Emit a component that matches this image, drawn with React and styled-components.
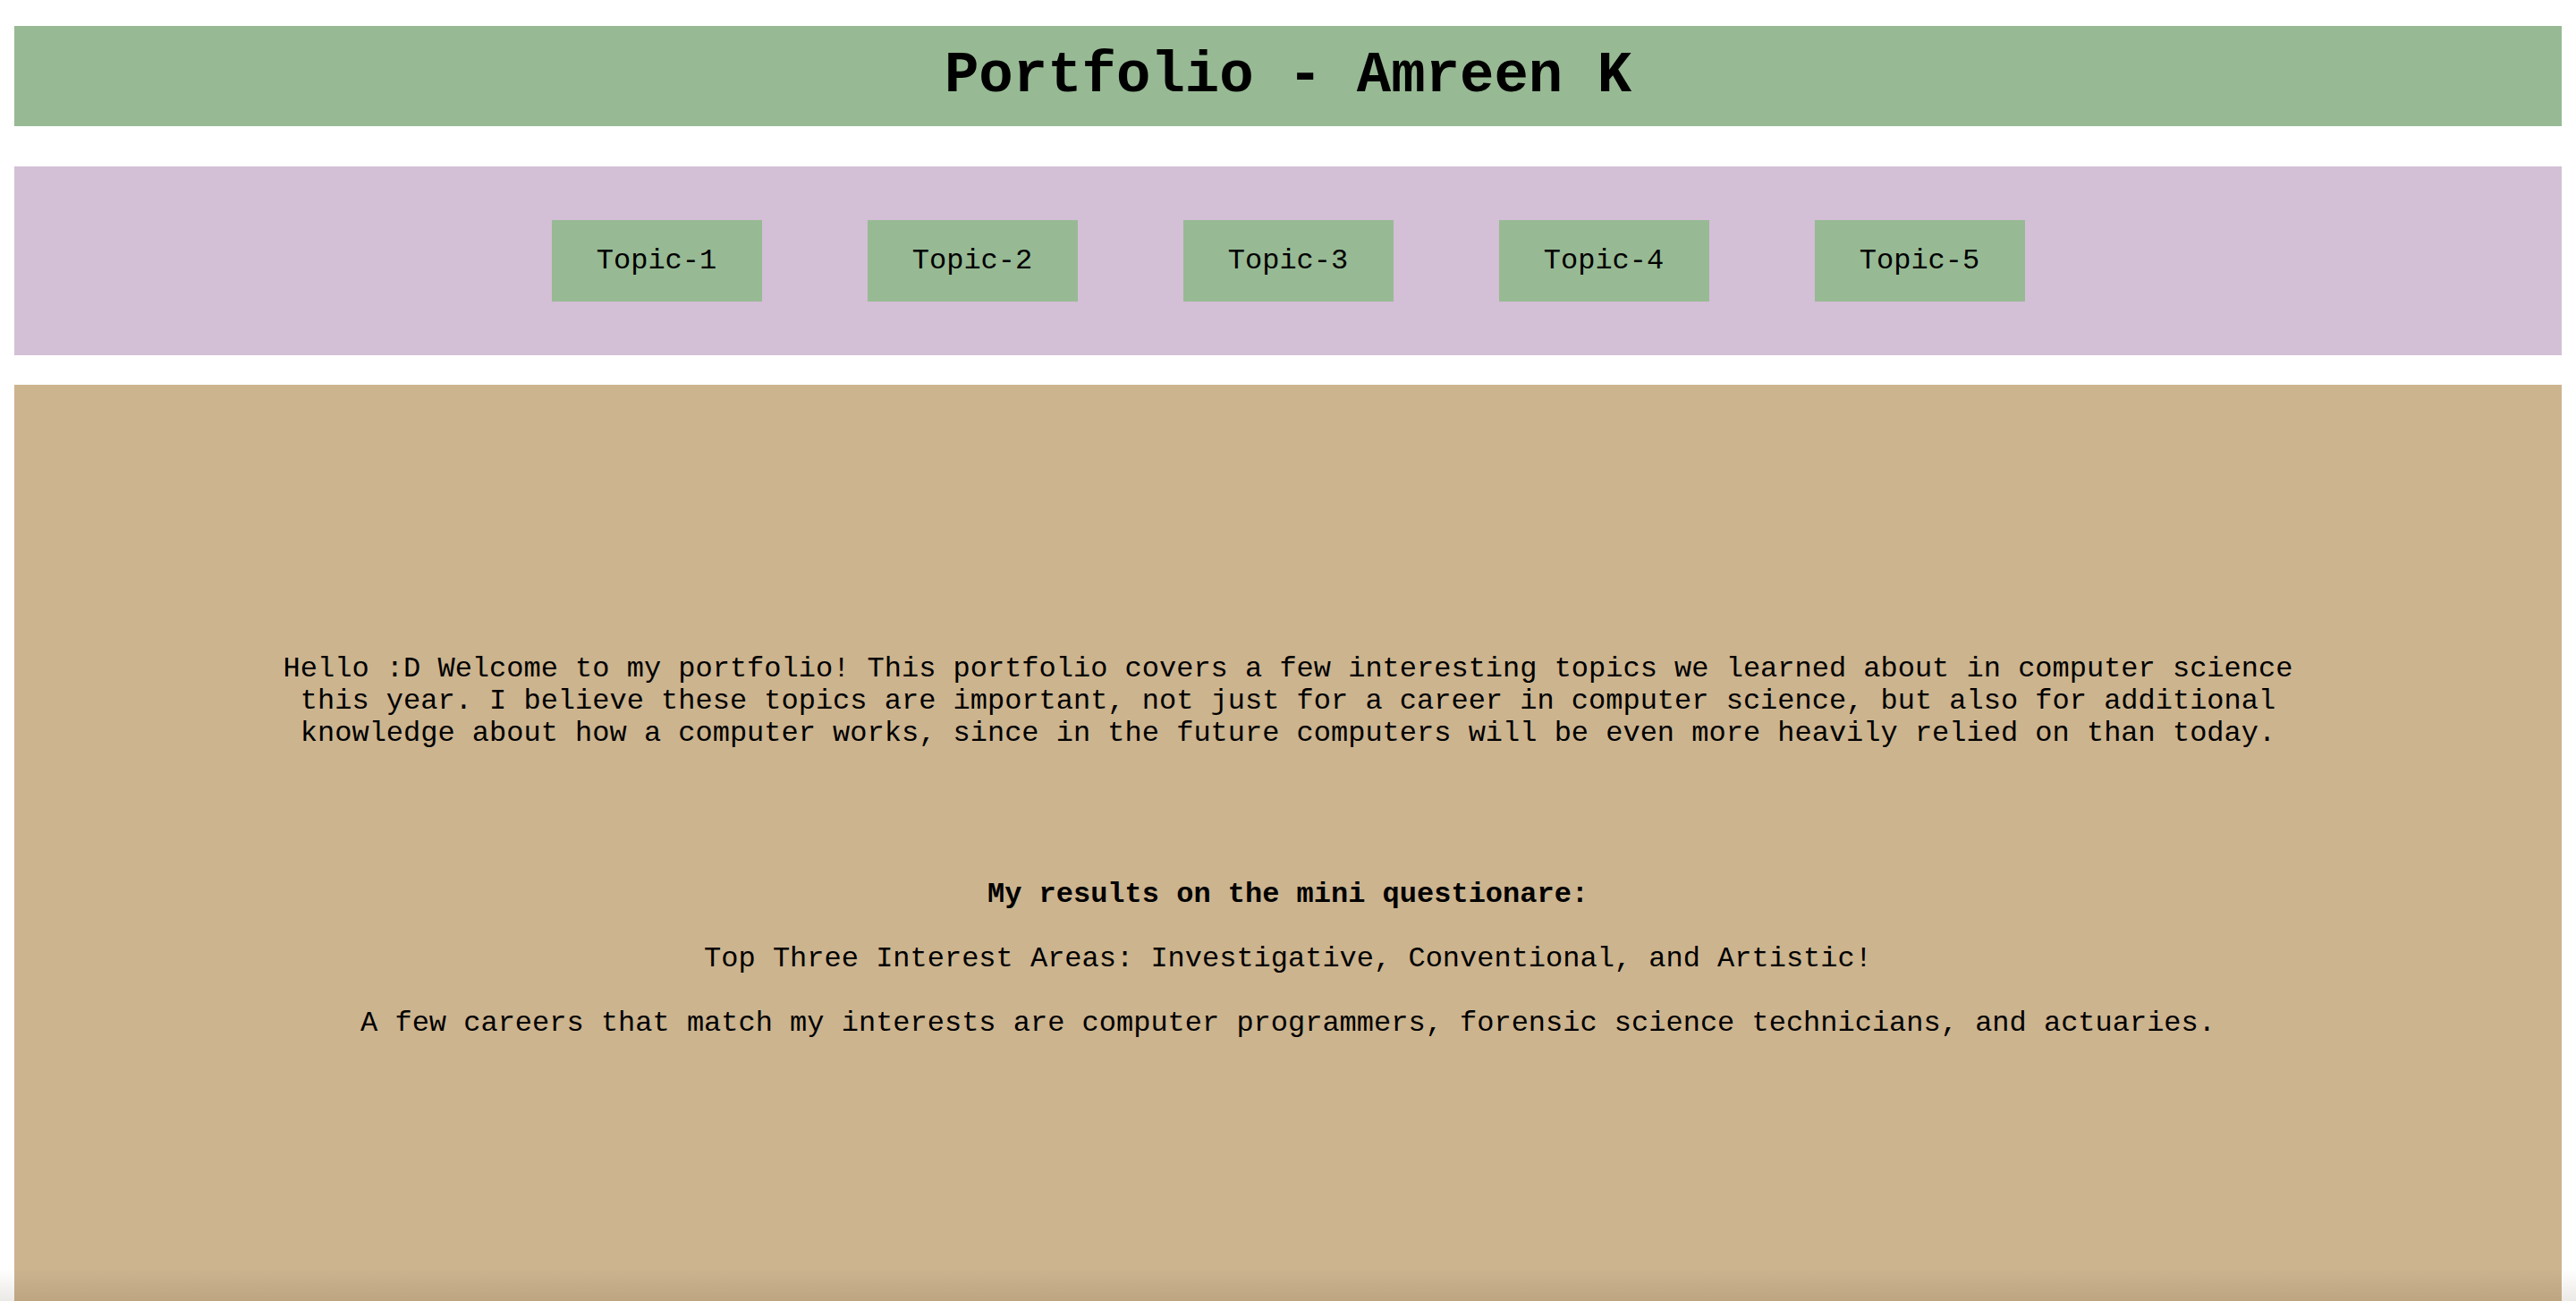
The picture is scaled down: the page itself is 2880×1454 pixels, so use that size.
import styled, { createGlobalStyle } from "styled-components";

const GlobalStyle = createGlobalStyle`
  html, body {
    margin: 0;
    padding: 0;
    background: #ffffff;
  }
  body {
    font-family: "Liberation Mono", "Courier New", monospace;
    color: #000;
  }
`;

const Page = styled.div`
  display: flex;
  flex-direction: column;
  padding: 29px 16px 0;
`;

const Header = styled.header`
  height: 112px;
  background-color: #97ba94;
  display: flex;
  align-items: center;
  justify-content: center;
`;

const Title = styled.h1`
  margin: 0;
  font-size: 64px;
  font-weight: bold;
  line-height: 72px;
`;

const Nav = styled.nav`
  margin-top: 45px;
  padding: 60px 0;
  background-color: #d3bfd6;
  display: flex;
  justify-content: center;
  gap: 118px;
`;

const TopicButton = styled.div`
  width: 235px;
  height: 91px;
  background-color: #97ba94;
  display: flex;
  align-items: center;
  justify-content: center;
  font-size: 32px;
  cursor: pointer;
`;

const Main = styled.main`
  margin-top: 33px;
  padding: 300px 0 420px;
  background-color: #ccb48f;
  text-align: center;
  font-size: 32px;
  line-height: 36px;
`;

const Intro = styled.p`
  width: 2300px;
  margin: 0 auto;
`;

const Results = styled.section`
  margin-top: 144px;
  display: flex;
  flex-direction: column;
  gap: 36px;
`;

const Line = styled.p`
  margin: 0;
  font-weight: ${(props) => (props.bold ? "bold" : "normal")};
`;

const BottomShade = styled.div`
  position: fixed;
  left: 0;
  right: 0;
  bottom: 0;
  height: 36px;
  pointer-events: none;
  background: linear-gradient(to bottom, rgba(0, 0, 0, 0), rgba(60, 40, 10, 0.1));
`;

const topics = ["Topic-1", "Topic-2", "Topic-3", "Topic-4", "Topic-5"];

const App = () => {
  return (
    <>
      <GlobalStyle />
      <Page>
        <Header>
          <Title>Portfolio - Amreen K</Title>
        </Header>
        <Nav>
          {topics.map((t) => (
            <TopicButton key={t}>{t}</TopicButton>
          ))}
        </Nav>
        <Main>
          <Intro>
            Hello :D Welcome to my portfolio! This portfolio covers a few
            interesting topics we learned about in computer science this year.
            I believe these topics are important, not just for a career in
            computer science, but also for additional knowledge about how a
            computer works, since in the future computers will be even more
            heavily relied on than today.
          </Intro>
          <Results>
            <Line bold>My results on the mini questionare:</Line>
            <Line>
              Top Three Interest Areas: Investigative, Conventional, and
              Artistic!
            </Line>
            <Line>
              A few careers that match my interests are computer programmers,
              forensic science technicians, and actuaries.
            </Line>
          </Results>
        </Main>
      </Page>
      <BottomShade />
    </>
  );
};

export default App;
